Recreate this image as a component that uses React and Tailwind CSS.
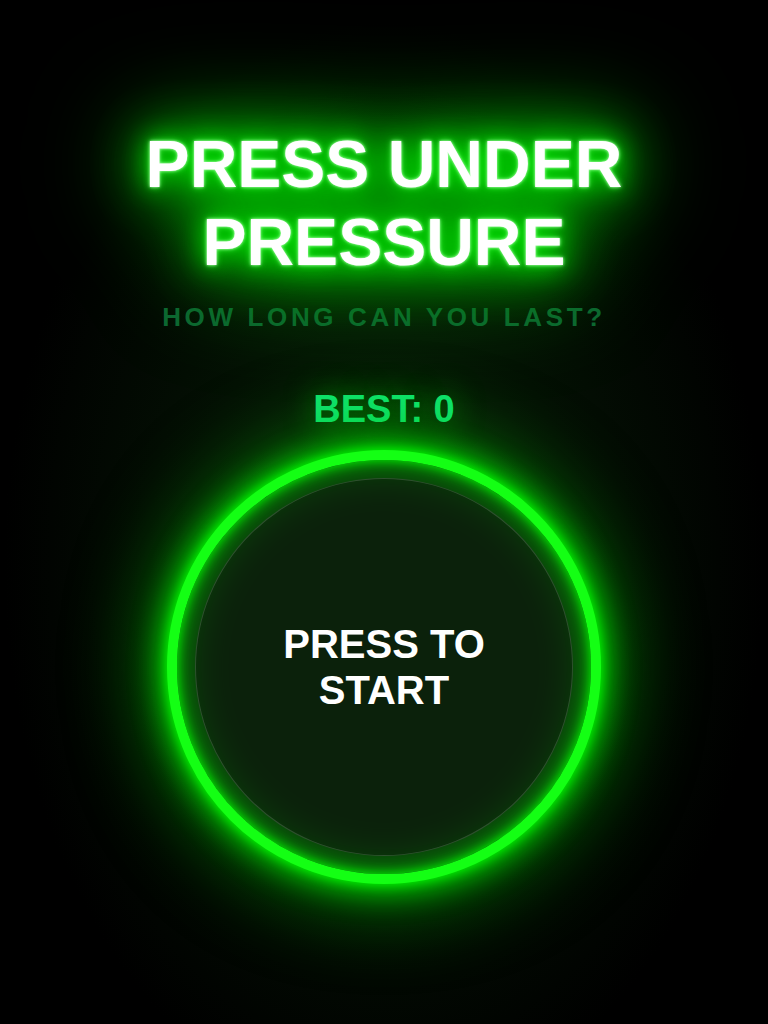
import React from 'react'

export default function App() {
  return (
    <div className="min-h-screen w-full bg-black bg-[radial-gradient(ellipse_at_50%_55%,#0a230a_0%,#041104_35%,#000_70%)] flex flex-col items-center font-['Liberation_Sans',Arial,sans-serif] font-bold">
      {/* neon title: stacked drop-shadows build the wide green haze */}
      <h1 className="mt-[125px] text-center text-white text-[66px] leading-[78px] [text-shadow:0_0_3px_#c0ffc0,0_0_6px_#40ff40] [filter:drop-shadow(0_0_12px_#00e000)_drop-shadow(0_0_26px_#00b400)_drop-shadow(0_0_46px_#008c00)]">
        PRESS UNDER
        <br />
        PRESSURE
      </h1>
      <p className="mt-[22px] text-[26px] leading-[28px] tracking-[0.14em] text-[#0d6633]">
        HOW LONG CAN YOU LAST?
      </p>
      <p className="mt-[57px] text-[38px] leading-[42px] text-[#10e472] [text-shadow:0_0_30px_rgba(0,200,0,0.7)]">
        BEST: 0
      </p>
      <button className="mt-[20px] w-[434px] h-[434px] rounded-full border-[10px] border-[#14ff14] bg-[#0c210c] flex items-center justify-center shadow-[0_0_12px_#00ff00,0_0_30px_6px_rgba(0,240,0,0.85),0_0_80px_18px_rgba(0,190,0,0.6),inset_0_0_12px_#00ff00,inset_0_0_44px_8px_rgba(0,210,0,0.7)]">
        <span className="w-[378px] h-[378px] rounded-full border border-white/15 bg-[#0c210c]/60 flex items-center justify-center">
          <span className="text-white text-[40px] leading-[46px] text-center">
            PRESS TO
            <br />
            START
          </span>
        </span>
      </button>
    </div>
  )
}
